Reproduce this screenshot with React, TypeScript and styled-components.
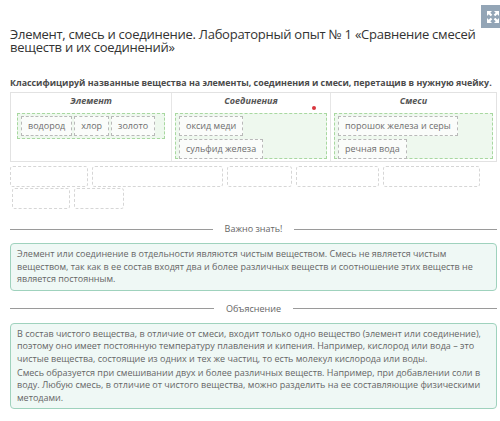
import styled, { createGlobalStyle } from 'styled-components';

const Global = createGlobalStyle`
  html, body {
    margin: 0;
    padding: 0;
    background: #fff;
    overflow: hidden;
  }
  body {
    font-family: 'Open Sans', 'Noto Sans', sans-serif;
    color: #555;
  }
`;

const Page = styled.div`
  width: 500px;
  height: 421px;
  box-sizing: border-box;
  padding: 0 3px 0 10px;
  overflow: hidden;
`;

const TopBar = styled.div`
  display: flex;
  justify-content: flex-end;
  padding-top: 5px;
  height: 28px;
  box-sizing: border-box;
  margin-right: -8px;
`;

const FullscreenButton = styled.div`
  width: 24px;
  height: 23px;
  background: #93a5b6;
  display: flex;
  align-items: center;
  justify-content: center;
`;

const Title = styled.h1`
  margin: 0;
  font-size: 13px;
  font-weight: 400;
  line-height: 12.5px;
  letter-spacing: -0.25px;
  color: #333;
`;

const Task = styled.p`
  margin: 24px 0 3px;
  font-size: 8.85px;
  font-weight: 700;
  color: #4a4a4a;
  line-height: 12px;
  white-space: nowrap;
`;

const Table = styled.div`
  display: grid;
  grid-template-columns: 160px 159px 1fr;
  border: 1px solid #e2e2e2;
  height: 70px;
  box-sizing: border-box;
`;

const Column = styled.div<{ $inset: string }>`
  border-left: 1px solid #e6e6e6;
  padding: 0 ${(p) => p.$inset};
  position: relative;
  &:first-child {
    border-left: none;
  }
`;

const ColumnHead = styled.div`
  height: 20px;
  line-height: 16px;
  text-align: center;
  font-size: 9px;
  font-weight: 700;
  font-style: italic;
  color: #555;
`;

const Zone = styled.div<{ $tall?: boolean }>`
  display: flex;
  flex-wrap: wrap;
  align-content: flex-start;
  gap: 3px 2px;
  padding: 2px 3px;
  height: ${(p) => (p.$tall ? '46px' : 'auto')};
  background: #eef8ee;
  border: 1px dashed #a8d8a0;
  box-sizing: border-box;
`;

const Item = styled.div`
  height: 20px;
  line-height: 18px;
  padding: 0 6px;
  box-sizing: border-box;
  background: #fafcfa;
  border: 1px dashed #b9b9b9;
  font-size: 9px;
  color: #6e6e6e;
  white-space: nowrap;
`;

const Dot = styled.span`
  position: absolute;
  top: 13px;
  right: 14px;
  width: 4px;
  height: 4px;
  border-radius: 50%;
  background: #d9363e;
`;

const Slots = styled.div`
  display: flex;
  flex-wrap: wrap;
  gap: 1px 4px;
  margin-top: 4px;
  width: 480px;
`;

const Slot = styled.div<{ $w: number; $shift?: number }>`
  width: ${(p) => p.$w}px;
  height: 21px;
  margin-left: ${(p) => p.$shift ?? 0}px;
  box-sizing: border-box;
  border: 1px dashed #d6d6d6;
  border-radius: 3px;
`;

const Divider = styled.div<{ $top: number }>`
  display: flex;
  align-items: center;
  gap: 12px;
  margin-top: ${(p) => p.$top}px;
  font-size: 9px;
  line-height: 12px;
  color: #666;
  &::before,
  &::after {
    content: '';
    flex: 1;
    border-top: 1px solid #9a9a9a;
  }
`;

const InfoBox = styled.div<{ $top: number }>`
  margin-top: ${(p) => p.$top}px;
  padding: 4px 6px 4px;
  background: #eff8f5;
  border: 1px solid #9fd2bd;
  border-radius: 4px;
  font-size: 9px;
  line-height: 12.5px;
  color: #666;
  p {
    margin: 0;
  }
  p + p {
    margin-top: 1.5px;
  }
`;

const ExpandIcon = () => (
  <svg width="14" height="14" viewBox="0 0 14 14" fill="#fff">
    <path d="M1 1h5L4.3 2.7l2 2-1.6 1.6-2-2L1 6z" />
    <path d="M13 1v5l-1.7-1.7-2 2-1.6-1.6 2-2L8 1z" />
    <path d="M1 13V8l1.7 1.7 2-2 1.6 1.6-2 2L6 13z" />
    <path d="M13 13H8l1.7-1.7-2-2 1.6-1.6 2 2L13 8z" />
  </svg>
);

export default function App() {
  return (
    <Page>
      <Global />
      <TopBar>
        <FullscreenButton>
          <ExpandIcon />
        </FullscreenButton>
      </TopBar>
      <Title>
        Элемент, смесь и соединение. Лабораторный опыт № 1 «Сравнение смесей
        веществ и их соединений»
      </Title>
      <Task>
        Классифицируй названные вещества на элементы, соединения и смеси,
        перетащив в нужную ячейку.
      </Task>
      <Table>
        <Column $inset="6px">
          <ColumnHead>Элемент</ColumnHead>
          <Zone>
            <Item>водород</Item>
            <Item>хлор</Item>
            <Item>золото</Item>
          </Zone>
        </Column>
        <Column $inset="3px">
          <ColumnHead>Соединения</ColumnHead>
          <Dot />
          <Zone $tall>
            <Item>оксид меди</Item>
            <Item>сульфид железа</Item>
          </Zone>
        </Column>
        <Column $inset="3px">
          <ColumnHead>Смеси</ColumnHead>
          <Zone $tall>
            <Item>порошок железа и серы</Item>
            <Item>речная вода</Item>
          </Zone>
        </Column>
      </Table>
      <Slots>
        <Slot $w={78} />
        <Slot $w={131} />
        <Slot $w={65} />
        <Slot $w={83} />
        <Slot $w={97} />
        <Slot $w={58} $shift={2} />
        <Slot $w={50} />
      </Slots>
      <Divider $top={14}>Важно знать!</Divider>
      <InfoBox $top={8}>
        <p>
          Элемент или соединение в отдельности являются чистым веществом. Смесь
          не является чистым веществом, так как в ее состав входят два и более
          различных веществ и соотношение этих веществ не является постоянным.
        </p>
      </InfoBox>
      <Divider $top={12}>Объяснение</Divider>
      <InfoBox $top={8}>
        <p>
          В состав чистого вещества, в отличие от смеси, входит только одно
          вещество (элемент или соединение), поэтому оно имеет постоянную
          температуру плавления и кипения. Например, кислород или вода – это
          чистые вещества, состоящие из одних и тех же частиц, то есть молекул
          кислорода или воды.
        </p>
        <p>
          Смесь образуется при смешивании двух и более различных веществ.
          Например, при добавлении соли в воду. Любую смесь, в отличие от
          чистого вещества, можно разделить на ее составляющие физическими
          методами.
        </p>
      </InfoBox>
    </Page>
  );
}
